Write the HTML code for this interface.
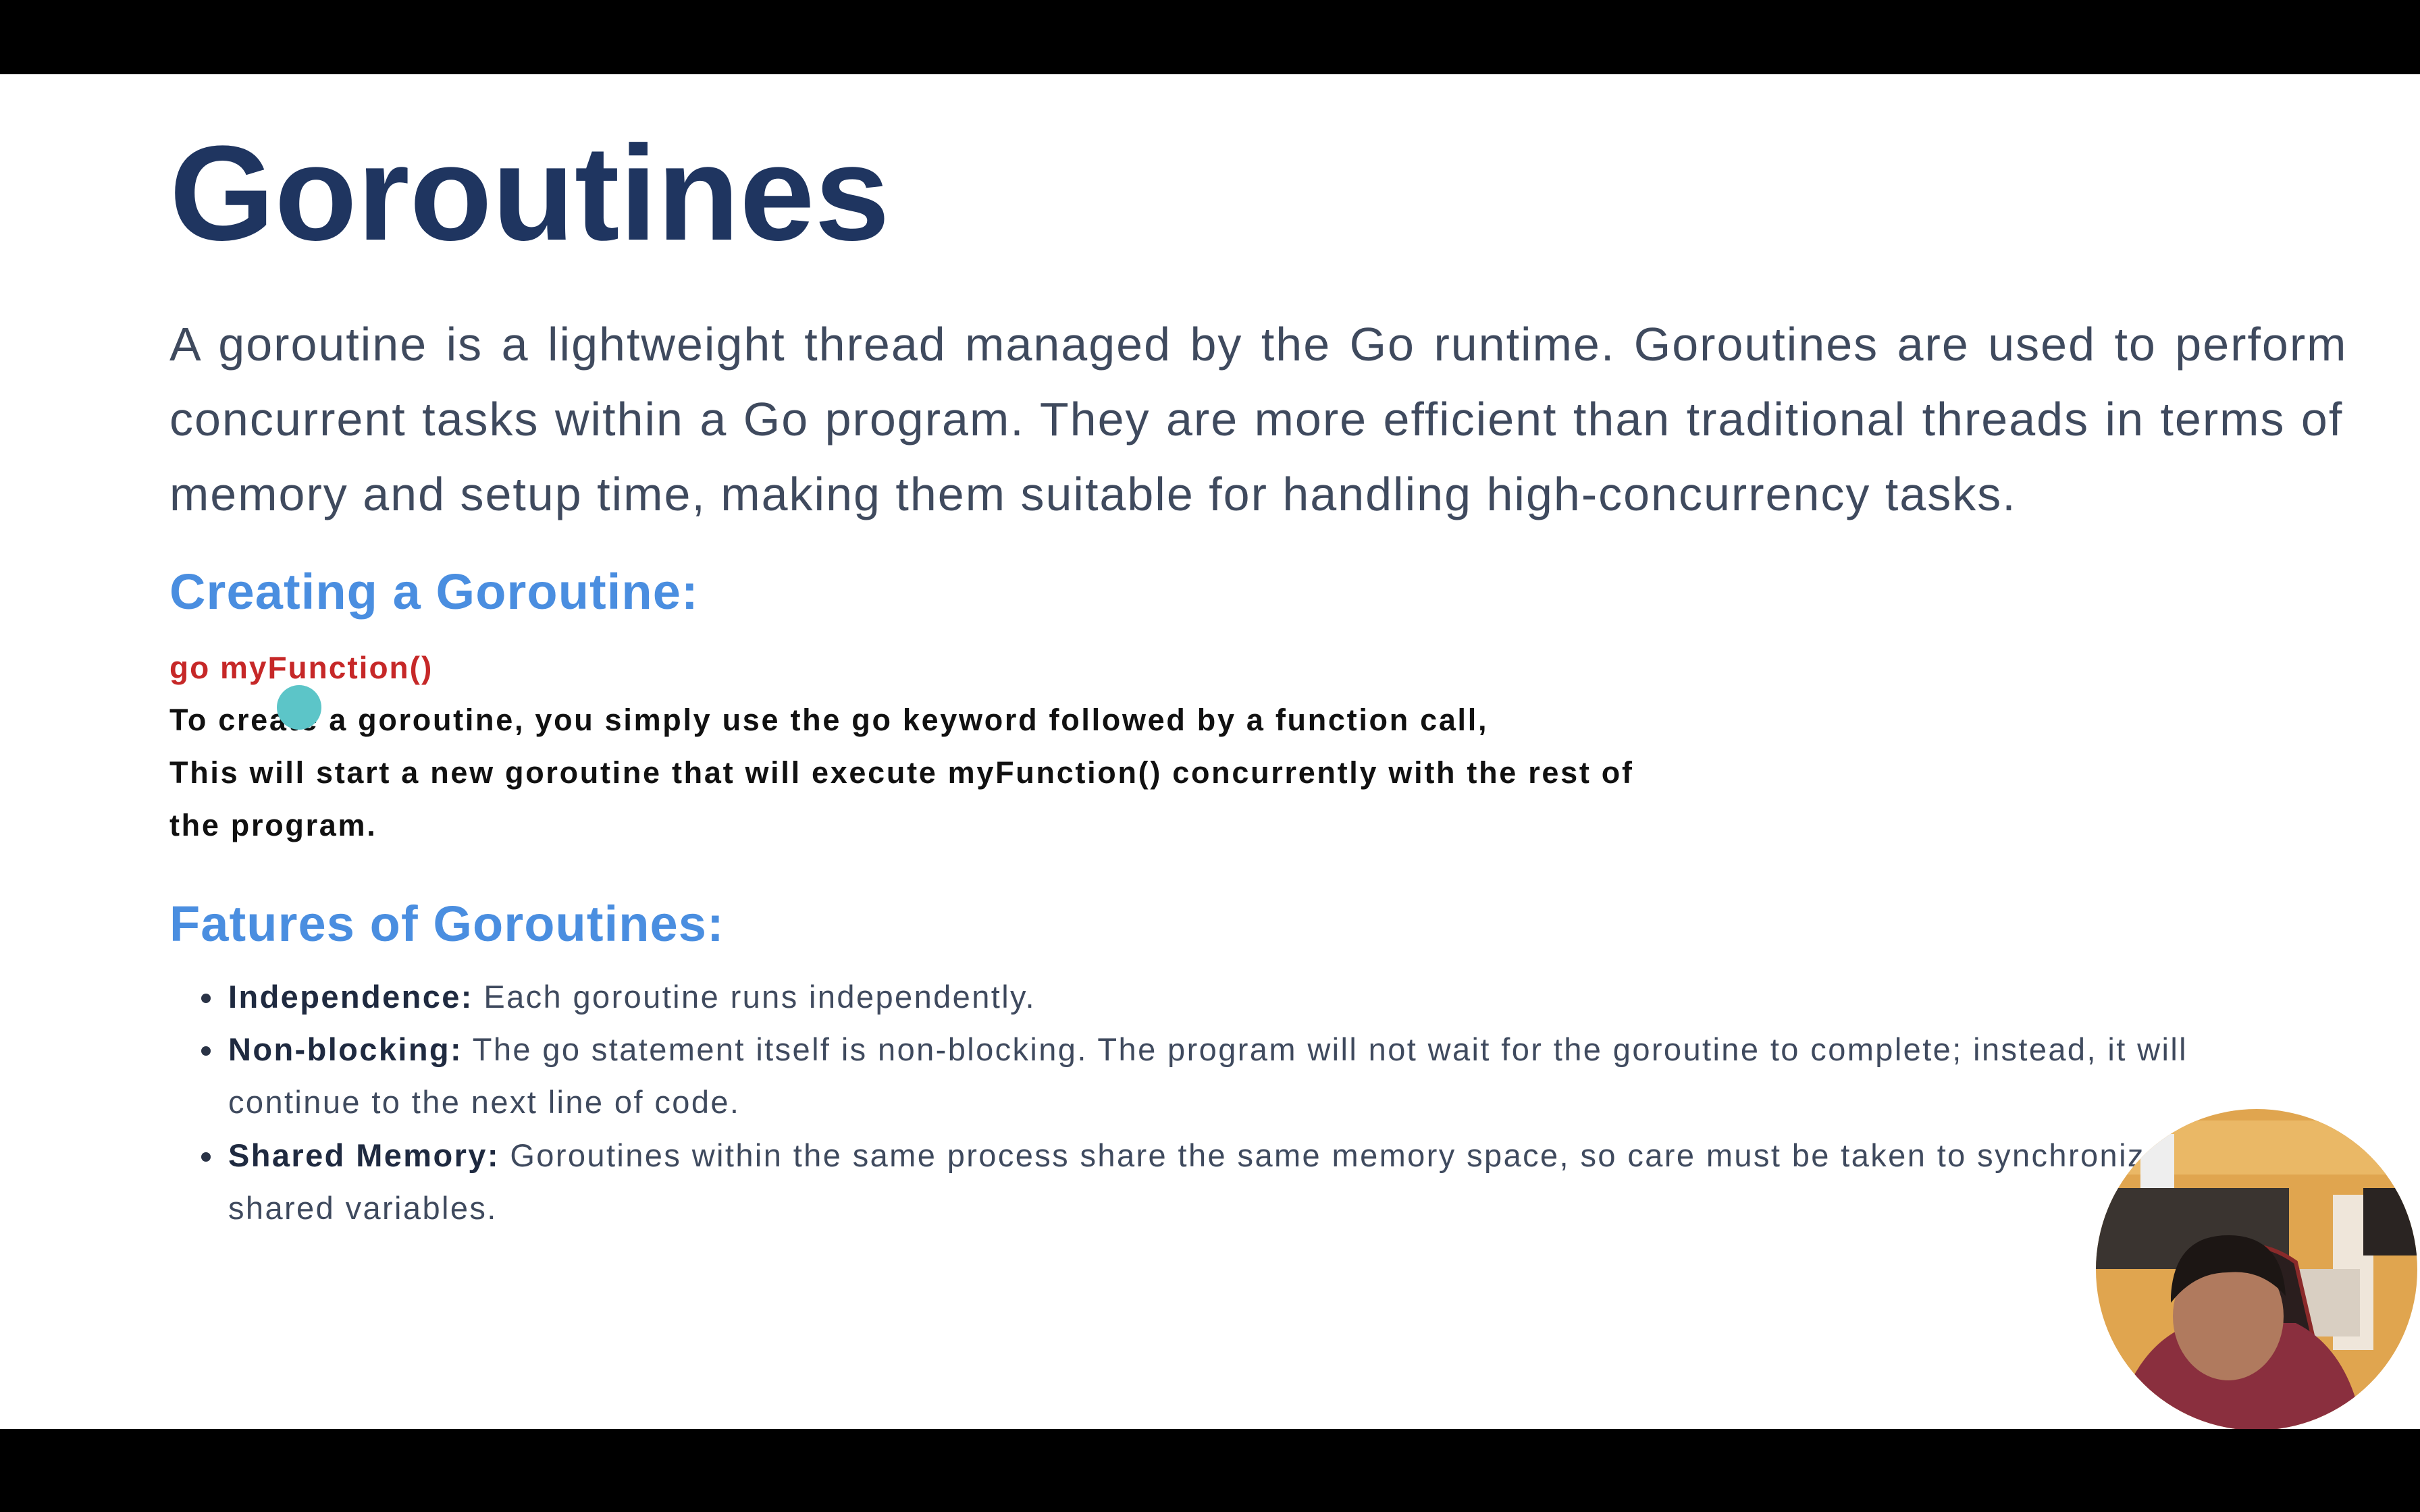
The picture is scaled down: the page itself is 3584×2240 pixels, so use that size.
<!DOCTYPE html>
<html><head><meta charset="utf-8"><style>
html,body{margin:0;padding:0}
body{width:3584px;height:2240px;background:#000;position:relative;overflow:hidden;font-family:"Liberation Sans",sans-serif}
#slide{position:absolute;left:0;top:110px;width:3584px;height:2007px;background:#fff}
.t{position:absolute;white-space:nowrap;left:251px}
#title{top:172px;font-size:200px;font-weight:bold;color:#1f3560;letter-spacing:0px}
.p{font-size:70px;color:#3f4a5e;line-height:111px;letter-spacing:2px}
.h{font-size:74px;font-weight:bold;color:#4a8ee0;letter-spacing:1.1px}
.code{font-size:46px;font-weight:bold;color:#c62828;letter-spacing:2px}
.b{font-size:45px;font-weight:bold;color:#111;line-height:78px;letter-spacing:2.7px}
.li{font-size:47px;color:#3f4a5e;left:338px;line-height:78px;letter-spacing:2.4px}
.li b{color:#1f2a40}
.dot{position:absolute;left:298px;width:14px;height:14px;border-radius:50%;background:#2a3346}
</style></head><body>
<div id="slide"></div>
<div class="t" id="title">Goroutines</div>
<div class="t p" style="top:455px"><span style="word-spacing:6px">A goroutine is a lightweight thread managed by the Go runtime. Goroutines are used to perform</span><br><span style="word-spacing:2px">concurrent tasks within a Go program. They are more efficient than traditional threads in terms of</span><br>memory and setup time, making them suitable for handling high-concurrency tasks.</div>
<div class="t h" style="top:834px">Creating a Goroutine:</div>
<div class="t code" style="top:962px">go myFunction()</div>
<div class="t b" style="top:1028px">To create a goroutine, you simply use the go keyword followed by a function call,<br>This will start a new goroutine that will execute myFunction() concurrently with the rest of<br>the program.</div>
<div style="position:absolute;left:410px;top:1015px;width:66px;height:66px;border-radius:50%;background:#5cc5c8"></div>
<div class="t h" style="top:1326px">Fatures of Goroutines:</div>
<div class="dot" style="top:1472px"></div>
<div class="dot" style="top:1550px"></div>
<div class="dot" style="top:1707px"></div>
<div class="t li" style="top:1438px"><b>Independence:</b> Each goroutine runs independently.</div>
<div class="t li" style="top:1516px"><b>Non-blocking:</b> The go statement itself is non-blocking. The program will not wait for the goroutine to complete; instead, it will<br>continue to the next line of code.</div>
<div class="t li" style="top:1673px"><b>Shared Memory:</b> Goroutines within the same process share the same memory space, so care must be taken to synchronize<br>shared variables.</div>
<svg style="position:absolute;left:0;top:0" width="3584" height="2240">
<defs><clipPath id="c"><circle cx="3342" cy="1881" r="238"/></clipPath></defs>
<g clip-path="url(#c)">
<rect x="3100" y="1640" width="490" height="480" fill="#e0a54f"/>
<rect x="3100" y="1660" width="490" height="80" fill="#eab866"/>
<rect x="3170" y="1680" width="50" height="80" fill="#eee"/>
<rect x="3100" y="1760" width="290" height="120" fill="#3a3430"/>
<rect x="3455" y="1770" width="60" height="230" fill="#efe6da"/>
<rect x="3405" y="1880" width="90" height="100" fill="#d9cfc2"/>
<rect x="3500" y="1760" width="80" height="100" fill="#2a2422"/>
<path d="M3250 1870 Q3330 1820 3400 1870 L3430 2000 L3260 2000 Z" fill="#2a1e1e" stroke="#8a2a2a" stroke-width="6"/>
<path d="M3130 2120 Q3160 1990 3250 1960 L3400 1960 Q3480 2000 3500 2120 Z" fill="#8a2f3e"/>
<ellipse cx="3300" cy="1950" rx="82" ry="95" fill="#b07a5e"/>
<path d="M3215 1920 Q3220 1830 3300 1830 Q3380 1830 3385 1920 Q3350 1880 3300 1885 Q3250 1885 3215 1930 Z" fill="#1c1614"/>
</g>
<rect x="0" y="2117" width="3584" height="123" fill="#000"/>
</svg>
</body></html>
